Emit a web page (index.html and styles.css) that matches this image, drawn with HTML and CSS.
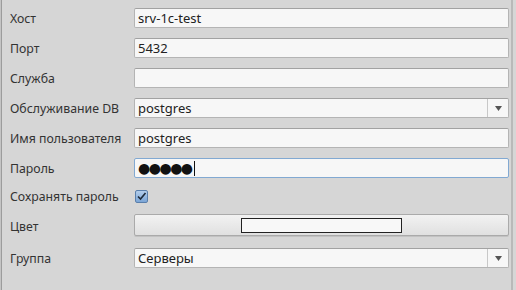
FILE: index.html
```html
<!DOCTYPE html>
<html>
	<head>
		<meta charset="utf-8" />
		<title>Подключение</title>
		<link rel="stylesheet" href="styles.css">
	</head>
	<body>
		<div id="panel">
			<div id="form">
				<span class="label">Хост</span>
				<div class="field">srv-1c-test</div>

				<span class="label">Порт</span>
				<div class="field">5432</div>

				<span class="label">Служба</span>
				<div class="field"></div>

				<span class="label">Обслуживание DB</span>
				<div class="field combo">
					<span class="combo_text">postgres</span>
					<span class="combo_arrow">
						<svg width="9" height="7" viewBox="0 0 9 7"><path d="M1 1h7L4.5 6z" fill="#555"/></svg>
					</span>
				</div>

				<span class="label">Имя пользователя</span>
				<div class="field">postgres</div>

				<span class="label">Пароль</span>
				<div class="field focus"><span class="dots">●●●●●</span><span class="caret"></span></div>

				<span class="label">Сохранять пароль</span>
				<div class="check_cell">
					<span class="check">
						<svg width="11" height="11" viewBox="0 0 11 11"><path d="M2 5.5l2.5 2.5L9.5 2" fill="none" stroke="#1d2a3a" stroke-width="1.6"/></svg>
					</span>
				</div>

				<span class="label">Цвет</span>
				<div class="button"><span class="swatch"></span></div>

				<span class="label">Группа</span>
				<div class="field combo">
					<span class="combo_text">Серверы</span>
					<span class="combo_arrow">
						<svg width="9" height="7" viewBox="0 0 9 7"><path d="M1 1h7L4.5 6z" fill="#555"/></svg>
					</span>
				</div>
			</div>
		</div>
	</body>
</html>
```

FILE: styles.css
```css
html, body{
	margin: 0;
	height: 100%;
	background: #d6d6d6;
}
body{
	font-family: "Noto Sans", "DejaVu Sans", sans-serif;
	font-size: 12.3px;
	color: #333;
}
#panel{
	box-sizing: border-box;
	width: 513px;
	height: 100%;
	border-left: 1px solid #c4c4c4;
	box-shadow: inset 1px 0 0 #9c9c9c;
	border-right: 2px solid #b9b9b9;
	padding: 8px 0 0 9px;
}
#form{
	display: grid;
	grid-template-columns: 124px 375px;
	grid-template-rows: repeat(6, 20px) 16px 24px 20px;
	row-gap: 10px;
	align-items: center;
}
#form .label{
	white-space: nowrap;
}
#form .field{
	box-sizing: border-box;
	height: 20px;
	background: #f7f7f7;
	border: 1px solid #b4b4b4;
	border-top-color: #a2a2a2;
	border-radius: 2px;
	padding: 0 3px;
	line-height: 18px;
	font-size: 13px;
	color: #222;
	display: flex;
	align-items: center;
}
#form .focus{
	border-color: #82a9d2;
}
#form .dots{
	font-family: "DejaVu Sans", sans-serif;
	font-size: 14px;
	letter-spacing: -1.5px;
	color: #111;
}
#form .caret{
	width: 1px;
	height: 15px;
	background: #111;
	margin-left: 2px;
}
#form .combo{
	padding-right: 0;
}
#form .combo_text{
	flex: 1;
}
#form .combo_arrow{
	width: 20px;
	height: 100%;
	border-left: 1px solid #c8c8c8;
	display: flex;
	align-items: center;
	justify-content: center;
}
#form .check_cell{
	display: flex;
	align-items: center;
	padding-left: 1px;
}
#form .check{
	box-sizing: border-box;
	width: 13px;
	height: 13px;
	border: 1px solid #5a7fab;
	border-radius: 2px;
	background: linear-gradient(#b3cdea, #7ba5d6);
	display: flex;
	align-items: center;
	justify-content: center;
}
#form .button{
	box-sizing: border-box;
	height: 22px;
	align-self: start;
	border: 1px solid #aaa;
	border-radius: 2px;
	background: linear-gradient(#f2f2f2, #e0e0e0);
	box-shadow: 0 1px 0 #c2c2c2;
	display: flex;
	align-items: center;
	justify-content: center;
}
#form .swatch{
	box-sizing: border-box;
	width: 161px;
	height: 15px;
	background: #f8f8f8;
	border: 1px solid #222;
}
```
